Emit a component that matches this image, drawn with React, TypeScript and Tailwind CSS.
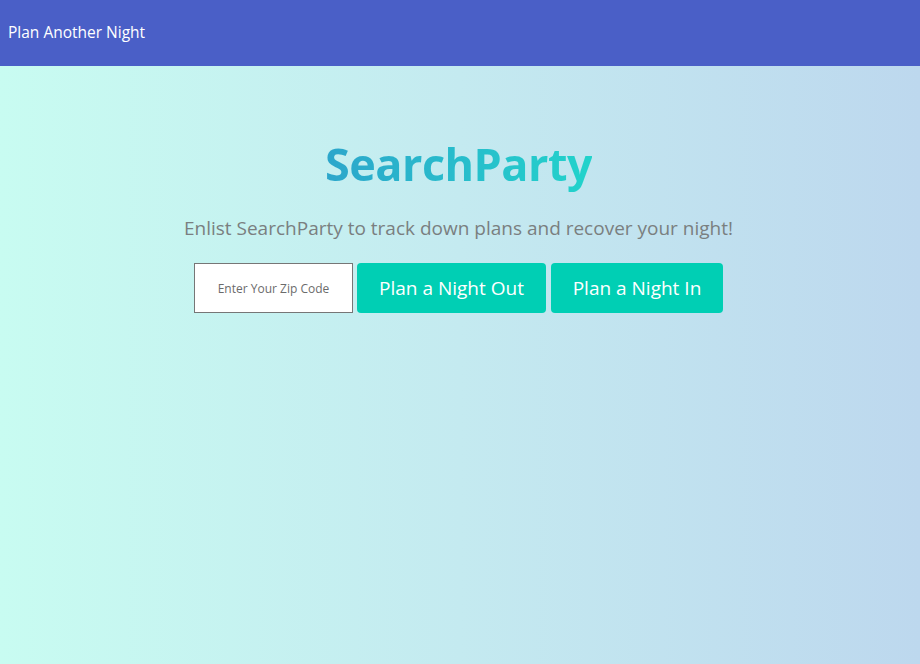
export default function App() {
  return (
    <div
      className="min-h-[664px] w-full flex flex-col bg-gradient-to-r from-[#c8fcf1] via-[#c4eaf0] to-[#bdd8ee]"
      style={{ fontFamily: '"Open Sans", "Noto Sans", sans-serif' }}
    >
      <header className="h-[66px] bg-[#4a5fc7] flex items-center px-2">
        <span className="text-white text-[15.5px] pb-[1px]">Plan Another Night</span>
      </header>

      <main className="flex flex-col items-center pt-[70px] pr-[3px]">
        <h1 className="text-[45px] leading-[56px] font-bold tracking-[-0.5px] bg-gradient-to-r from-[#2ca6cb] to-[#22d3cb] bg-clip-text text-transparent">
          SearchParty
        </h1>
        <p className="mt-[22px] text-[19px] leading-[28px] text-[#7a7f80]">
          Enlist SearchParty to track down plans and recover your night!
        </p>

        <form
          className="mt-[21px] flex items-stretch gap-[4px]"
          onSubmit={(e) => e.preventDefault()}
        >
          <input
            type="text"
            placeholder="Enter Your Zip Code"
            className="w-[159px] h-[50px] bg-white border border-[#767676] text-center text-[12px] text-[#333] placeholder:text-[#6b6b6b] outline-none"
          />
          <button
            type="button"
            className="w-[189px] h-[50px] rounded-[4px] bg-[#00cfb4] text-white text-[19px]"
          >
            Plan a Night Out
          </button>
          <button
            type="button"
            className="w-[172px] h-[50px] ml-[1px] rounded-[4px] bg-[#00cfb4] text-white text-[19px]"
          >
            Plan a Night In
          </button>
        </form>
      </main>
    </div>
  );
}
